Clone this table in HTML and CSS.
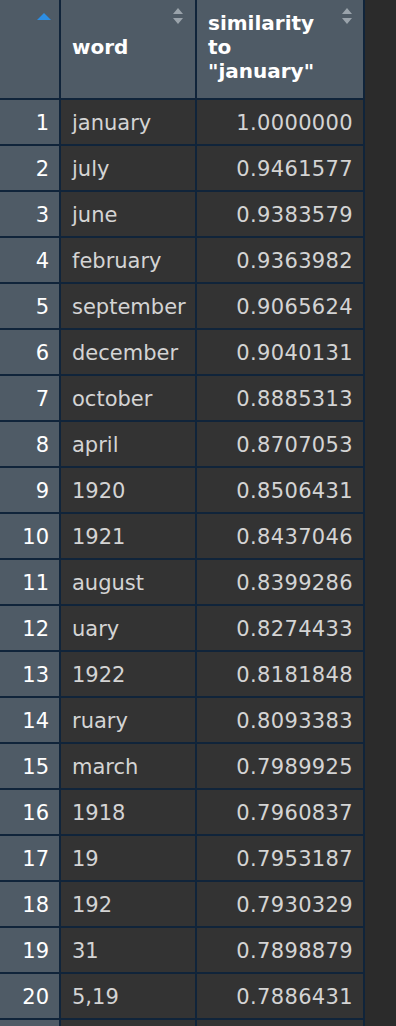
FILE: index.html
```html
<!DOCTYPE html>
<html>
<head>
<meta charset="utf-8">
<link rel="stylesheet" href="styles.css">
</head>
<body>
<table class="grid">
  <thead>
    <tr>
      <th class="idx-head">
        <svg class="sort-asc" width="14" height="7" viewBox="0 0 14 7"><path d="M0 7 L7 0 L14 7 Z" fill="#2d8ee3"/></svg>
      </th>
      <th class="col-head">
        <span class="label">word</span>
        <svg class="sort-both" width="10" height="16" viewBox="0 0 10 16"><path d="M0 6 L5 0 L10 6 Z M0 10 L5 16 L10 10 Z" fill="#9aa3ab"/></svg>
      </th>
      <th class="col-head sim">
        <span class="label">similarity to "january"</span>
        <svg class="sort-both" width="10" height="16" viewBox="0 0 10 16"><path d="M0 6 L5 0 L10 6 Z M0 10 L5 16 L10 10 Z" fill="#9aa3ab"/></svg>
      </th>
    </tr>
  </thead>
  <tbody>
    <tr><td class="idx">1</td><td class="word">january</td><td class="num">1.0000000</td></tr>
    <tr><td class="idx">2</td><td class="word">july</td><td class="num">0.9461577</td></tr>
    <tr><td class="idx">3</td><td class="word">june</td><td class="num">0.9383579</td></tr>
    <tr><td class="idx">4</td><td class="word">february</td><td class="num">0.9363982</td></tr>
    <tr><td class="idx">5</td><td class="word">september</td><td class="num">0.9065624</td></tr>
    <tr><td class="idx">6</td><td class="word">december</td><td class="num">0.9040131</td></tr>
    <tr><td class="idx">7</td><td class="word">october</td><td class="num">0.8885313</td></tr>
    <tr><td class="idx">8</td><td class="word">april</td><td class="num">0.8707053</td></tr>
    <tr><td class="idx">9</td><td class="word">1920</td><td class="num">0.8506431</td></tr>
    <tr><td class="idx">10</td><td class="word">1921</td><td class="num">0.8437046</td></tr>
    <tr><td class="idx">11</td><td class="word">august</td><td class="num">0.8399286</td></tr>
    <tr><td class="idx">12</td><td class="word">uary</td><td class="num">0.8274433</td></tr>
    <tr><td class="idx">13</td><td class="word">1922</td><td class="num">0.8181848</td></tr>
    <tr><td class="idx">14</td><td class="word">ruary</td><td class="num">0.8093383</td></tr>
    <tr><td class="idx">15</td><td class="word">march</td><td class="num">0.7989925</td></tr>
    <tr><td class="idx">16</td><td class="word">1918</td><td class="num">0.7960837</td></tr>
    <tr><td class="idx">17</td><td class="word">19</td><td class="num">0.7953187</td></tr>
    <tr><td class="idx">18</td><td class="word">192</td><td class="num">0.7930329</td></tr>
    <tr><td class="idx">19</td><td class="word">31</td><td class="num">0.7898879</td></tr>
    <tr><td class="idx">20</td><td class="word">5,19</td><td class="num">0.7886431</td></tr>
    <tr><td class="idx"></td><td class="word"></td><td class="num"></td></tr>
  </tbody>
</table>
</body>
</html>
```
FILE: styles.css
```css
html, body {
  margin: 0;
  padding: 0;
  background: #2b2b2b;
  overflow: hidden;
}
body {
  font-family: "DejaVu Sans", "Liberation Sans", sans-serif;
}
.grid {
  border-collapse: separate;
  border-spacing: 0;
  table-layout: fixed;
  width: 365px;
}
.grid th, .grid td {
  border-right: 2px solid #10243a;
  border-bottom: 2px solid #10243a;
  padding: 0;
  box-sizing: border-box;
}
.grid th {
  background: #4f5b66;
  height: 100px;
  position: relative;
  color: #ffffff;
  font-weight: bold;
  font-size: 20px;
  line-height: 24px;
  text-align: left;
  vertical-align: middle;
}
.idx-head { width: 61px; }
.col-head { width: 136px; padding: 0 30px 4px 11px !important; }
.col-head.sim { width: 168px; padding: 0 40px 4px 11px !important; }
.sort-asc {
  position: absolute;
  top: 13px;
  left: 37px;
}
.sort-both {
  position: absolute;
  top: 8px;
  right: 12px;
}
.col-head.sim .sort-both { right: 11px; }
.grid td {
  height: 46px;
  font-size: 21px;
  line-height: 24px;
  vertical-align: middle;
  white-space: nowrap;
}
.idx {
  background: #4f5b66;
  color: #ffffff;
  text-align: right;
  padding: 2px 10px 0 0 !important;
}
.word {
  background: #333333;
  color: #d4d4d4;
  padding: 2px 0 0 11px !important;
}
.num {
  background: #333333;
  color: #d4d4d4;
  text-align: right;
  letter-spacing: 0.35px;
  padding: 2px 10px 0 0 !important;
}
```
